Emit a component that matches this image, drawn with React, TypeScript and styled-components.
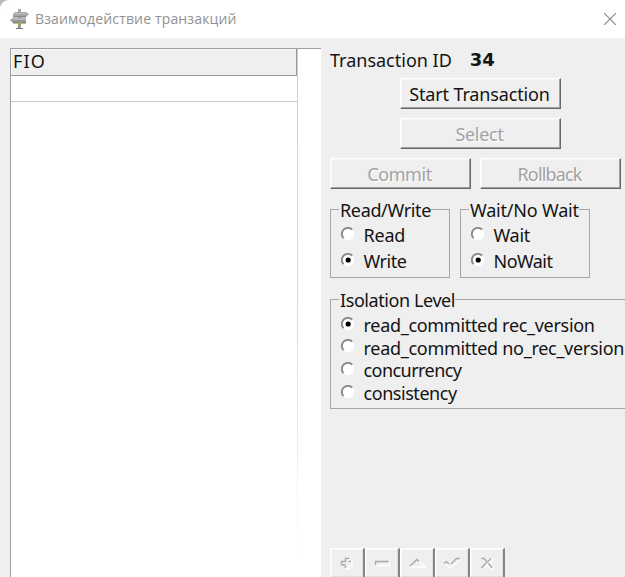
import React from 'react';
import styled, { createGlobalStyle } from 'styled-components';

const Global = createGlobalStyle`
  * { box-sizing: border-box; }
  body { margin: 0; background: #b9b9b9; }
`;

const Window = styled.div`
  width: 625px;
  height: 577px;
  overflow: hidden;
  display: flex;
  flex-direction: column;
  background: #efefef;
  border-top-left-radius: 9px;
  font: 18px/24px 'Noto Sans', 'Open Sans', sans-serif;
  color: #141414;
  white-space: nowrap;
`;

const TitleBar = styled.header`
  height: 38px;
  flex: none;
  display: flex;
  align-items: center;
  background: #fff;
  padding: 0 9px 0 10px;
`;

const Title = styled.h1`
  flex: 1;
  margin: 0 0 1px 6px;
  font: 400 14px/20px 'Open Sans', 'Noto Sans', sans-serif;
  letter-spacing: 0.15px;
  color: #929292;
`;

const CloseButton = styled.button`
  display: flex;
  padding: 0;
  border: 0;
  background: none;
`;

const Body = styled.main`
  flex: 1;
  min-height: 0;
  display: flex;
  padding: 10px 0 0 10px;
`;

const Grid = styled.section`
  width: 311px;
  flex: none;
  background: #fff;
  border-top: 1px solid #a0a0a0;
  border-left: 1px solid #a0a0a0;
`;

const GridColumn = styled.div`
  width: 287px;
  height: 100%;
  border-right: 1px solid;
  border-image: linear-gradient(#cfcfcf 0, #dcdcdc 280px, #eeeeee 400px, #ffffff 510px) 1;
`;

const HeaderCell = styled.div`
  height: 27px;
  padding-left: 2px;
  letter-spacing: 1.1px;
  background: #efefef;
  border-bottom: 1px solid #989898;
  border-right: 1px solid #989898;
  box-shadow: inset 1px 1px #fafafa;
`;

const GridRow = styled.div`
  height: 26px;
  border-bottom: 1px solid #c8c8c8;
`;

const Controls = styled.section`
  width: 304px;
  flex: none;
  padding-left: 9px;
  display: flex;
  flex-direction: column;
  > * { flex: none; }
`;

const Text = styled.span<{ $spacing?: number }>`
  letter-spacing: ${p => p.$spacing ?? 0}px;
`;

const Status = styled.div`
  height: 30px;
  display: flex;
  gap: 18px;
`;

const TransactionId = styled.strong`
  font: bold 18px/24px 'DejaVu Sans', sans-serif;
`;

const ButtonRow = styled.div`
  height: 40px;
  display: flex;
  gap: 9px;
`;

const PushButton = styled.button<{ $wide?: boolean }>`
  width: ${p => (p.$wide ? 161 : 141)}px;
  height: 31px;
  margin-left: ${p => (p.$wide ? 70 : 0)}px;
  padding: 0 2px 0 0;
  font: inherit;
  color: #141414;
  background: #efefef;
  border: 1px solid;
  border-color: #fff #696969 #696969 #fff;
  box-shadow: inset -1px -1px #a0a0a0, inset 1px 1px #f7f7f7;
  &:disabled { color: #a2a2a2; text-shadow: 1px 1px #fff; }
`;

const Groups = styled.div`
  display: flex;
  gap: 10px;
  height: 90px;
`;

const Group = styled.fieldset<{ $w: number; $h: number; $pitch: number; $top: number }>`
  width: ${p => p.$w}px;
  height: ${p => p.$h}px;
  flex: none;
  min-width: 0;
  margin: 0;
  padding: ${p => p.$top}px 0 0 10px;
  border: 1px solid #a6a6a6;
  display: grid;
  grid-auto-rows: ${p => p.$pitch}px;
  align-content: start;
`;

const Legend = styled.legend`
  height: 23px;
  margin-left: -2px;
  padding: 0 0 0 1px;
`;

const Option = styled.label`
  display: flex;
  align-items: center;
  gap: 8.5px;
`;

const RadioIcon = styled.svg`
  width: 14px;
  height: 14px;
  flex: none;
  margin-top: -3px;
`;

const Navigator = styled.div`
  display: flex;
  margin-top: 139px;
`;

const NavButton = styled.button`
  width: 35px;
  height: 31px;
  padding: 0;
  border: 1px solid;
  border-width: 1px 2px 2px 1px;
  border-color: #fff #858585 #858585 #fff;
  box-shadow: inset -1px -1px #dedede, inset 1px 1px #f7f7f7;
  background: #efefef;
  svg { display: block; margin: 0 auto; }
`;

function Radio({ label, checked, spacing }: { label: string; checked?: boolean; spacing?: number }) {
  return (
    <Option>
      <RadioIcon viewBox="0 0 14 14">
        <circle cx="7" cy="7" r="6.2" fill="#fff" />
        <path d="M2.600 11.200A6 6 0 0 1 11.200 2.600" fill="none" stroke="#8a8a8a" strokeWidth="1.900" />
        {checked && <circle cx="7.200" cy="7" r="2.600" fill="#000" />}
      </RadioIcon>
      <Text $spacing={spacing}>{label}</Text>
    </Option>
  );
}

const navIcons = [
  {
    name: 'Insert',
    light: 'M10 5h3v3h3v4h-3v3h-3v-3',
    dark: 'M9.500 7.500V4.500h3.500M5.500 11V7.500h4M9.500 11.500v2.500M12.500 7.500h2.500M6 11h3.500',
  },
  { name: 'Delete', light: 'M5.500 11.500h13v-4', dark: 'M4.500 11V7.500h13' },
  { name: 'Edit', light: 'M4 13h15l-7-7', dark: 'M4 12l7-6.500 2 2' },
  { name: 'Post', light: 'M4 10l5 4L19 6', dark: 'M3 9.500l2.500-2L8 10M10 10l5.500-5.500H18.500' },
  {
    name: 'Cancel',
    light: 'M7 5l4 4 4-4 2 1-4 4 4 5-2 0-4-4-4 4',
    dark: 'M5.500 4.500h2.500l3 4 4-4M10 9l-4.500 5M12.500 9.500l3.500 4.500',
  },
];

function SignpostIcon() {
  return (
    <svg width="19" height="20" viewBox="0 0 19 20">
      <path d="M8 0h3v19H8z" fill="#aaa" />
      <path d="M5 3h11l3 2-3 3H3V5z" fill="#a4a4a4" />
      <path d="M4 4h11l2 1H4z" fill="#c4c4c4" />
      <path d="M0 11l3-2h13v5H3z" fill="#969696" />
      <path d="M3 9h13v2H1z" fill="#b8b8b8" />
      <path d="M3 8h13M3 14h13" stroke="#777" />
      <path d="M8 13h3v3H8z" fill="#a9a542" />
      <path d="M9 16v3M6 19.500h7" stroke="#777" />
    </svg>
  );
}

export default function App() {
  return (
    <>
      <Global />
      <Window>
        <TitleBar>
          <SignpostIcon />
          <Title>Взаимодействие транзакций</Title>
          <CloseButton aria-label="Close">
            <svg width="12" height="12" viewBox="0 0 12 12">
              <path d="M0 0l12 12M12 0L0 12" stroke="#858585" strokeWidth="1.1" />
            </svg>
          </CloseButton>
        </TitleBar>
        <Body>
          <Grid>
            <GridColumn>
              <HeaderCell>FIO</HeaderCell>
              <GridRow />
            </GridColumn>
          </Grid>
          <Controls>
            <Status>
              <Text>Transaction ID</Text>
              <TransactionId>34</TransactionId>
            </Status>
            <ButtonRow><PushButton $wide><Text $spacing={-0.15}>Start Transaction</Text></PushButton></ButtonRow>
            <ButtonRow><PushButton $wide disabled><Text $spacing={-0.3}>Select</Text></PushButton></ButtonRow>
            <ButtonRow>
              <PushButton disabled><Text $spacing={-0.45}>Commit</Text></PushButton>
              <PushButton disabled><Text $spacing={-0.85}>Rollback</Text></PushButton>
            </ButtonRow>
            <Groups>
              <Group $w={120} $h={80} $pitch={26} $top={1}>
                <Legend><Text $spacing={-0.35}>Read/Write</Text></Legend>
                <Radio label="Read" spacing={-0.2} />
                <Radio label="Write" spacing={-0.45} checked />
              </Group>
              <Group $w={130} $h={80} $pitch={26} $top={1}>
                <Legend><Text $spacing={-0.2}>Wait/No Wait</Text></Legend>
                <Radio label="Wait" spacing={-0.3} />
                <Radio label="NoWait" spacing={-0.55} checked />
              </Group>
            </Groups>
            <Group $w={310} $h={121} $pitch={22.6} $top={3}>
              <Legend><Text $spacing={-0.42}>Isolation Level</Text></Legend>
              <Radio label="read_committed rec_version" spacing={-0.3} checked />
              <Radio label="read_committed no_rec_version" spacing={-0.29} />
              <Radio label="concurrency" spacing={-0.55} />
              <Radio label="consistency" spacing={-0.45} />
            </Group>
            <Navigator>
              {navIcons.map(icon => (
                <NavButton key={icon.name} aria-label={icon.name} disabled>
                  <svg width="22" height="18" viewBox="0 0 22 18" fill="none">
                    <path d={icon.light} stroke="#fff" strokeWidth="1.3" />
                    <path d={icon.dark} stroke="#a8a8a8" strokeWidth="1.3" />
                  </svg>
                </NavButton>
              ))}
            </Navigator>
          </Controls>
        </Body>
      </Window>
    </>
  );
}
